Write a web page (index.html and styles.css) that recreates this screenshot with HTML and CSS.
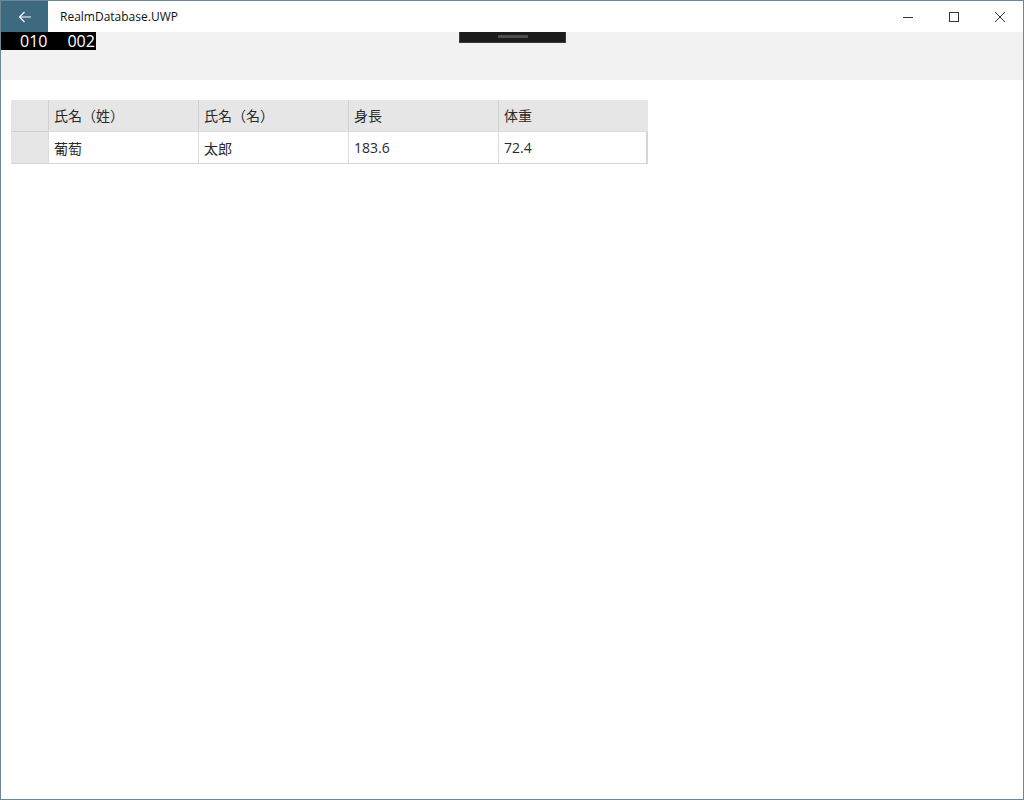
FILE: index.html
```html
<html>
    <head>
        <meta charset="utf-8">
        <link rel="stylesheet" href="styles.css">
    </head>
    <body>
        <div class="window">
            <div class="titlebar">
                <div class="back-button">
                    <svg width="14" height="12" viewBox="0 0 14 12">
                        <path d="M13 6H1.5M6.5 1L1.5 6l5 5" fill="none" stroke="#fff" stroke-width="1.1"/>
                    </svg>
                </div>
                <div class="title">RealmDatabase.UWP</div>
                <div class="caption-buttons">
                    <div class="caption-button">
                        <svg width="10" height="10" viewBox="0 0 10 10"><path d="M0 5.5h10" stroke="#333" stroke-width="1"/></svg>
                    </div>
                    <div class="caption-button">
                        <svg width="10" height="10" viewBox="0 0 10 10"><rect x="0.5" y="0.5" width="9" height="9" fill="none" stroke="#333" stroke-width="1"/></svg>
                    </div>
                    <div class="caption-button">
                        <svg width="10" height="10" viewBox="0 0 10 10"><path d="M0 0l10 10M10 0L0 10" stroke="#333" stroke-width="1"/></svg>
                    </div>
                </div>
            </div>
            <div class="command-band">
                <div class="frame-counter"><span>010</span><span>002</span></div>
                <div class="drag-handle"><div class="grip"></div></div>
            </div>
            <div class="content">
                <div class="grid">
                    <div class="cell head corner"></div>
                    <div class="cell head">氏名（姓）</div>
                    <div class="cell head">氏名（名）</div>
                    <div class="cell head">身長</div>
                    <div class="cell head">体重</div>

                    <div class="cell row-head"></div>
                    <div class="cell">葡萄</div>
                    <div class="cell">太郎</div>
                    <div class="cell">183.6</div>
                    <div class="cell">72.4</div>
                </div>
            </div>
        </div>
    </body>
</html>
```

FILE: styles.css
```css
html, body {
    margin: 0;
    padding: 0;
}
body {
    font-family: "Open Sans", "Noto Sans CJK JP", sans-serif;
    color: #222;
}
.window {
    box-sizing: border-box;
    width: 1024px;
    height: 800px;
    border: 1px solid #6c8898;
    display: flex;
    flex-direction: column;
    background: #fff;
}
.titlebar {
    height: 31px;
    display: flex;
    align-items: center;
    flex-shrink: 0;
}
.back-button {
    width: 47px;
    height: 31px;
    background: #3e6a80;
    display: flex;
    align-items: center;
    justify-content: center;
}
.title {
    margin-left: 12px;
    font-size: 12px;
    color: #111;
    flex: 1;
}
.caption-buttons {
    display: flex;
    height: 31px;
}
.caption-button {
    width: 46px;
    display: flex;
    align-items: center;
    justify-content: center;
}
.command-band {
    position: relative;
    height: 48px;
    background: #f2f2f2;
    flex-shrink: 0;
}
/* debug frame-rate overlay */
.frame-counter {
    position: absolute;
    left: 0;
    top: 0;
    width: 95px;
    height: 18px;
    background: #000;
    color: #fff;
    font-family: "Open Sans", sans-serif;
    font-size: 16px;
    line-height: 18px;
    display: flex;
    gap: 20px;
    padding-left: 19px;
    box-sizing: border-box;
}
.drag-handle {
    position: absolute;
    left: 458px;
    top: 0;
    width: 107px;
    height: 11px;
    box-sizing: border-box;
    background: #1c1c1c;
    border: 1px solid #3a3a3a;
    border-top: none;
    display: flex;
    justify-content: center;
    padding-top: 3px;
}
.grip {
    width: 30px;
    height: 3px;
    background: #4e4e4e;
}
.content {
    padding: 20px 10px;
}
.grid {
    display: grid;
    grid-template-columns: 37px 150px 150px 150px 150px;
    grid-template-rows: 31px 32px;
    width: 637px;
    border-right: 2px solid #d6d6d6;
    border-bottom: 1px solid #d6d6d6;
    box-sizing: border-box;
}
.cell {
    font-size: 14px;
    color: #2a2a2a;
    display: flex;
    align-items: center;
    padding-left: 5px;
    border-left: 1px solid #dcdcdc;
    border-top: 1px solid #dcdcdc;
}
.head {
    background: #e6e6e6;
    border-top: none;
    border-left: 1px solid #d0d0d0;
    padding-bottom: 2px;
}
.corner, .row-head {
    background: #e6e6e6;
    padding-left: 0;
    border-left: none;
}
.row-head {
    border-top: 1px solid #d0d0d0;
}
```
